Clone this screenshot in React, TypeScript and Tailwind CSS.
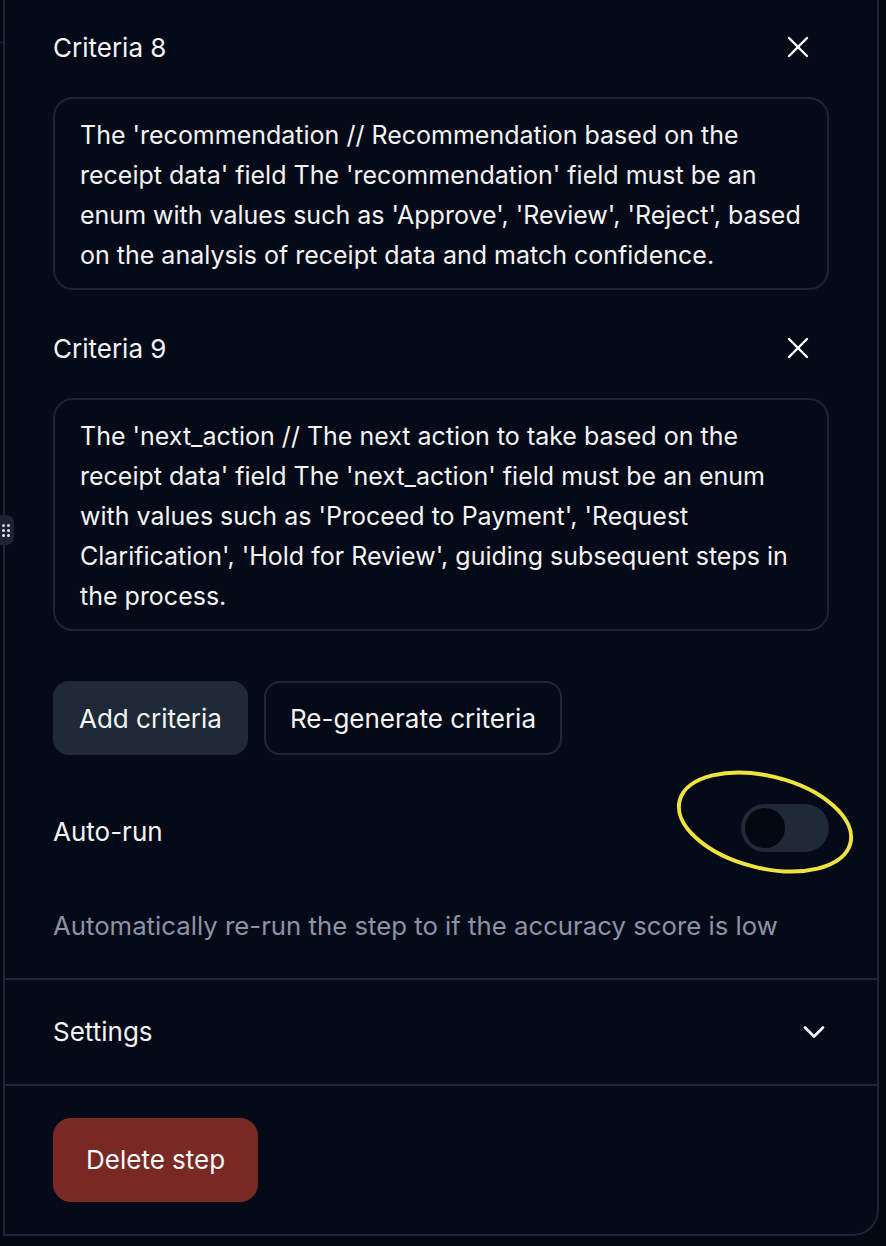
import React from 'react';
import { X, ChevronDown } from 'lucide-react';

const CRITERIA = [
  {
    n: 8,
    text: "The 'recommendation // Recommendation based on the receipt data' field The 'recommendation' field must be an enum with values such as 'Approve', 'Review', 'Reject', based on the analysis of receipt data and match confidence.",
  },
  {
    n: 9,
    text: "The 'next_action // The next action to take based on the receipt data' field The 'next_action' field must be an enum with values such as 'Proceed to Payment', 'Request Clarification', 'Hold for Review', guiding subsequent steps in the process.",
  },
];

function CriteriaBlock({ n, text, first }: { n: number; text: string; first: boolean }) {
  return (
    <div className="flex flex-col">
      <div className={`flex items-center justify-between h-[40px] ${first ? 'mt-[27px]' : 'mt-[38px]'}`}>
        <span>Criteria {n}</span>
        <X size={36} strokeWidth={1.6} className="mr-[13px] text-white" />
      </div>
      <div className="mt-[30px] rounded-[20px] border-2 border-[#1c2333] pl-[25px] pr-[15px] pt-[16px] pb-[13px] text-[25px] leading-[40px]">
        {text}
      </div>
    </div>
  );
}

export default function App() {
  return (
    <div
      className="relative w-[886px] h-[1246px] bg-[#040813] overflow-hidden text-[26px] text-[#f3f4f6]"
      style={{ fontFamily: "Inter, 'Liberation Sans', sans-serif" }}
    >
      {/* sliver of the panel behind */}
      <div className="absolute left-0 top-[42px] w-[3px] h-px bg-[#1c2333]" />
      <div className="absolute left-[-10px] top-[515px] w-[24px] h-[30px] rounded-[8px] bg-[#1c2333] flex items-center justify-end pr-[4px]">
        <div className="grid grid-cols-2 gap-[2px]">
          {Array.from({ length: 6 }).map((_, i) => (
            <span key={i} className="block w-[3px] h-[3px] rounded-full bg-[#e5e7eb]" />
          ))}
        </div>
      </div>

      <div className="ml-[3px] w-[876px] h-[1236px] border-l-2 border-r-2 border-b-2 border-[#1c2333] rounded-br-[26px] bg-[#050a18] flex flex-col">
        <div className="pl-[48px] pr-[48px] flex flex-col">
          {CRITERIA.map((c, i) => (
            <CriteriaBlock key={c.n} n={c.n} text={c.text} first={i === 0} />
          ))}

          <div className="flex gap-[16px] mt-[50px]">
            <button className="h-[74px] px-[26px] rounded-[16px] bg-[#1f2937] text-[#f3f4f6]">Add criteria</button>
            <button className="h-[74px] px-[24px] rounded-[16px] border-2 border-[#1f2737] text-[#f3f4f6]">Re-generate criteria</button>
          </div>

          <div className="flex items-center justify-between mt-[52px]">
            <span>Auto-run</span>
            <div className="w-[88px] h-[48px] rounded-full bg-[#1f2937] p-[4px] -translate-y-[3px]">
              <div className="w-[40px] h-[40px] rounded-full bg-[#030712]" />
            </div>
          </div>

          <p className="mt-[52px] text-[25.75px] text-[#8b94a6]">Automatically re-run the step to if the accuracy score is low</p>
        </div>

        <div className="mt-[32px] border-t-2 border-[#1c2333] h-[106px] flex items-center justify-between pl-[48px] pr-[45px]">
          <span>Settings</span>
          <ChevronDown size={36} strokeWidth={1.8} />
        </div>

        <div className="border-t-2 border-[#1c2333] pl-[48px] pt-[32px]">
          <button className="h-[84px] px-[33px] rounded-[18px] bg-[#7a2823] text-[#f9fafb]">Delete step</button>
        </div>
      </div>

      {/* yellow annotation ellipse */}
      <svg className="absolute left-[670px] top-[765px] pointer-events-none" width="190" height="115" viewBox="0 0 190 115">
        <ellipse cx="95" cy="57" rx="88" ry="46" transform="rotate(14 95 57)" fill="none" stroke="#efe33c" strokeWidth="4" />
      </svg>
    </div>
  );
}
